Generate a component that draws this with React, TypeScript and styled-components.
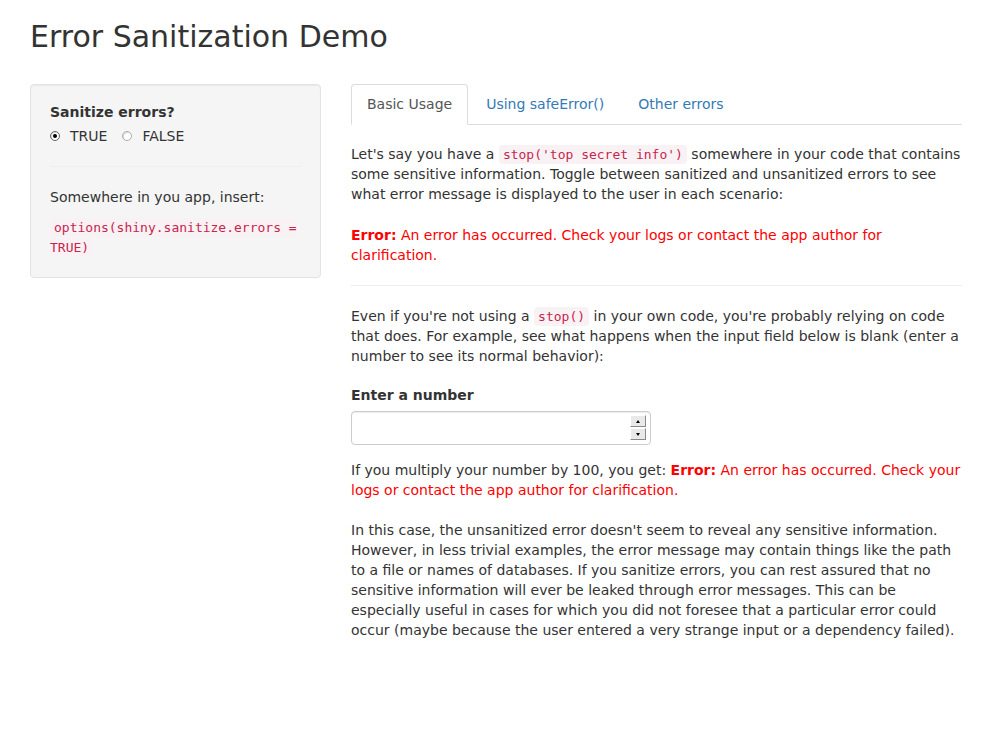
import React, { useState } from "react";
import styled, { createGlobalStyle } from "styled-components";

const GlobalStyle = createGlobalStyle`
  body {
    margin: 0;
    font-family: "DejaVu Sans", "Liberation Sans", sans-serif;
    font-size: 14px;
    line-height: 20px;
    color: #333;
    background: #fff;
  }
  * {
    box-sizing: border-box;
  }
`;

const tabs = ["Basic Usage", "Using safeError()", "Other errors"];

export default function App() {
  const [sanitize, setSanitize] = useState(true);
  const [active, setActive] = useState(0);
  const [value, setValue] = useState("");

  return (
    <Page>
      <GlobalStyle />
      <Title>Error Sanitization Demo</Title>
      <Layout>
        <Well>
          <FieldLabel>Sanitize errors?</FieldLabel>
          <RadioGroup>
            <RadioLabel onClick={() => setSanitize(true)}>
              <RadioCircle $checked={sanitize} />
              TRUE
            </RadioLabel>
            <RadioLabel onClick={() => setSanitize(false)}>
              <RadioCircle $checked={!sanitize} />
              FALSE
            </RadioLabel>
          </RadioGroup>
          <Rule />
          <Para>Somewhere in you app, insert:</Para>
          <div>
            <Code>options(shiny.sanitize.errors = TRUE)</Code>
          </div>
        </Well>

        <Main>
          <TabList>
            {tabs.map((t, i) => (
              <TabItem key={t}>
                <TabLink $active={i === active} onClick={() => setActive(i)}>
                  {t}
                </TabLink>
              </TabItem>
            ))}
          </TabList>
          <TabContent>
            <Para $gap={21}>
              Let's say you have a <Code>stop('top secret info')</Code> somewhere
              in your code that contains some sensitive information. Toggle
              between sanitized and unsanitized errors to see what error message
              is displayed to the user in each scenario:
            </Para>
            <ErrorBlock>
              <strong>Error:</strong> An error has occurred. Check your logs or
              contact the app author for clarification.
            </ErrorBlock>
            <Rule />
            <Para $gap={19}>
              Even if you're not using a <Code>stop()</Code> in your own code,
              you're probably relying on code that does. For example, see what
              happens when the input field below is blank (enter a number to see
              its normal behavior):
            </Para>
            <FormGroup>
              <FieldLabel htmlFor="num">Enter a number</FieldLabel>
              <InputWrap>
                <NumberInput
                  id="num"
                  type="text"
                  value={value}
                  onChange={(e) => setValue(e.target.value)}
                />
                <Spinner>
                  <SpinButton onClick={() => setValue(String((Number(value) || 0) + 1))}>
                    <Arrow $up />
                  </SpinButton>
                  <SpinButton onClick={() => setValue(String((Number(value) || 0) - 1))}>
                    <Arrow />
                  </SpinButton>
                </Spinner>
              </InputWrap>
            </FormGroup>
            <Para $gap={20}>
              If you multiply your number by 100, you get:{" "}
              <ErrorInline>
                <strong>Error:</strong> An error has occurred. Check your logs or
                contact the app author for clarification.
              </ErrorInline>
            </Para>
            <Para>
              In this case, the unsanitized error doesn't seem to reveal any
              sensitive information. However, in less trivial examples, the error
              message may contain things like the path to a file or names of
              databases. If you sanitize errors, you can rest assured that no
              sensitive information will ever be leaked through error messages.
              This can be especially useful in cases for which you did not
              foresee that a particular error could occur (maybe because the user
              entered a very strange input or a dependency failed).
            </Para>
          </TabContent>
        </Main>
      </Layout>
    </Page>
  );
}

const Page = styled.div`
  padding: 0 30px 40px;
`;

const Title = styled.h2`
  margin: 20px 0 31px;
  font-size: 30px;
  font-weight: 500;
  line-height: 33px;
  color: #333;
`;

const Layout = styled.div`
  display: grid;
  grid-template-columns: 291px 1fr;
  column-gap: 30px;
  align-items: start;
`;

const Well = styled.div`
  min-height: 20px;
  padding: 17px 19px 20px;
  background: #f5f5f5;
  border: 1px solid #e3e3e3;
  border-radius: 4px;
  box-shadow: inset 0 1px 1px rgba(0, 0, 0, 0.05);
`;

const FieldLabel = styled.label`
  display: block;
  font-weight: bold;
  margin-bottom: 4px;
`;

const RadioGroup = styled.div`
  display: flex;
  gap: 15px;
`;

const RadioLabel = styled.label`
  display: inline-flex;
  align-items: center;
  gap: 10px;
  cursor: pointer;
`;

const RadioCircle = styled.span<{ $checked: boolean }>`
  position: relative;
  width: 10px;
  height: 10px;
  border-radius: 50%;
  border: 1px solid ${(p) => (p.$checked ? "#666" : "#aaa")};
  background: #fff;
  box-shadow: inset 1px 1px 1px rgba(0, 0, 0, 0.15);
  &::after {
    content: "";
    display: ${(p) => (p.$checked ? "block" : "none")};
    position: absolute;
    left: 2px;
    top: 2px;
    width: 4px;
    height: 4px;
    border-radius: 50%;
    background: #000;
  }
`;

const Rule = styled.hr`
  margin: 20px 0;
  border: 0;
  border-top: 1px solid #eee;
`;

const Para = styled.p<{ $gap?: number }>`
  margin: 0 0 ${(p) => p.$gap ?? 10}px;
`;

const Code = styled.code`
  padding: 2px 4px;
  font-family: "DejaVu Sans Mono", "Liberation Mono", monospace;
  font-size: 13px;
  line-height: 1;
  color: #c7254e;
  background: #f9f2f4;
  border-radius: 4px;
`;

const Main = styled.div`
  min-width: 0;
`;

const TabList = styled.ul`
  display: flex;
  margin: 0;
  padding: 0;
  list-style: none;
  border-bottom: 1px solid #ddd;
`;

const TabItem = styled.li`
  margin-bottom: -1px;
`;

const TabLink = styled.a<{ $active: boolean }>`
  display: block;
  margin-right: 2px;
  padding: 9px 15px 10px;
  line-height: 20px;
  border: 1px solid ${(p) => (p.$active ? "#ddd" : "transparent")};
  border-bottom-color: transparent;
  border-radius: 4px 4px 0 0;
  background: ${(p) => (p.$active ? "#fff" : "transparent")};
  color: ${(p) => (p.$active ? "#555" : "#337ab7")};
  cursor: pointer;
`;

const TabContent = styled.div`
  padding-top: 19px;
`;

const ErrorBlock = styled.div`
  color: red;
`;

const ErrorInline = styled.span`
  color: red;
`;

const FormGroup = styled.div`
  margin-bottom: 15px;
  width: 300px;
  label {
    margin-bottom: 6px;
  }
`;

const InputWrap = styled.div`
  position: relative;
`;

const NumberInput = styled.input`
  display: block;
  width: 100%;
  height: 34px;
  padding: 6px 12px;
  font: inherit;
  color: #555;
  background: #fff;
  border: 1px solid #ccc;
  border-radius: 4px;
  box-shadow: inset 0 1px 1px rgba(0, 0, 0, 0.075);
  outline: none;
`;

const Spinner = styled.div`
  position: absolute;
  right: 5px;
  top: 4px;
  display: flex;
  flex-direction: column;
  gap: 1px;
`;

const SpinButton = styled.span`
  display: flex;
  align-items: center;
  justify-content: center;
  width: 16px;
  height: 12px;
  background: #e9e9e9;
  border-top: 1px solid #fff;
  border-left: 1px solid #fff;
  border-right: 1px solid #8a8a8a;
  border-bottom: 1px solid #8a8a8a;
  cursor: pointer;
`;

const Arrow = styled.span<{ $up?: boolean }>`
  width: 0;
  height: 0;
  border-left: 2px solid transparent;
  border-right: 2px solid transparent;
  ${(p) =>
    p.$up ? "border-bottom: 3px solid #000;" : "border-top: 3px solid #000;"}
`;
